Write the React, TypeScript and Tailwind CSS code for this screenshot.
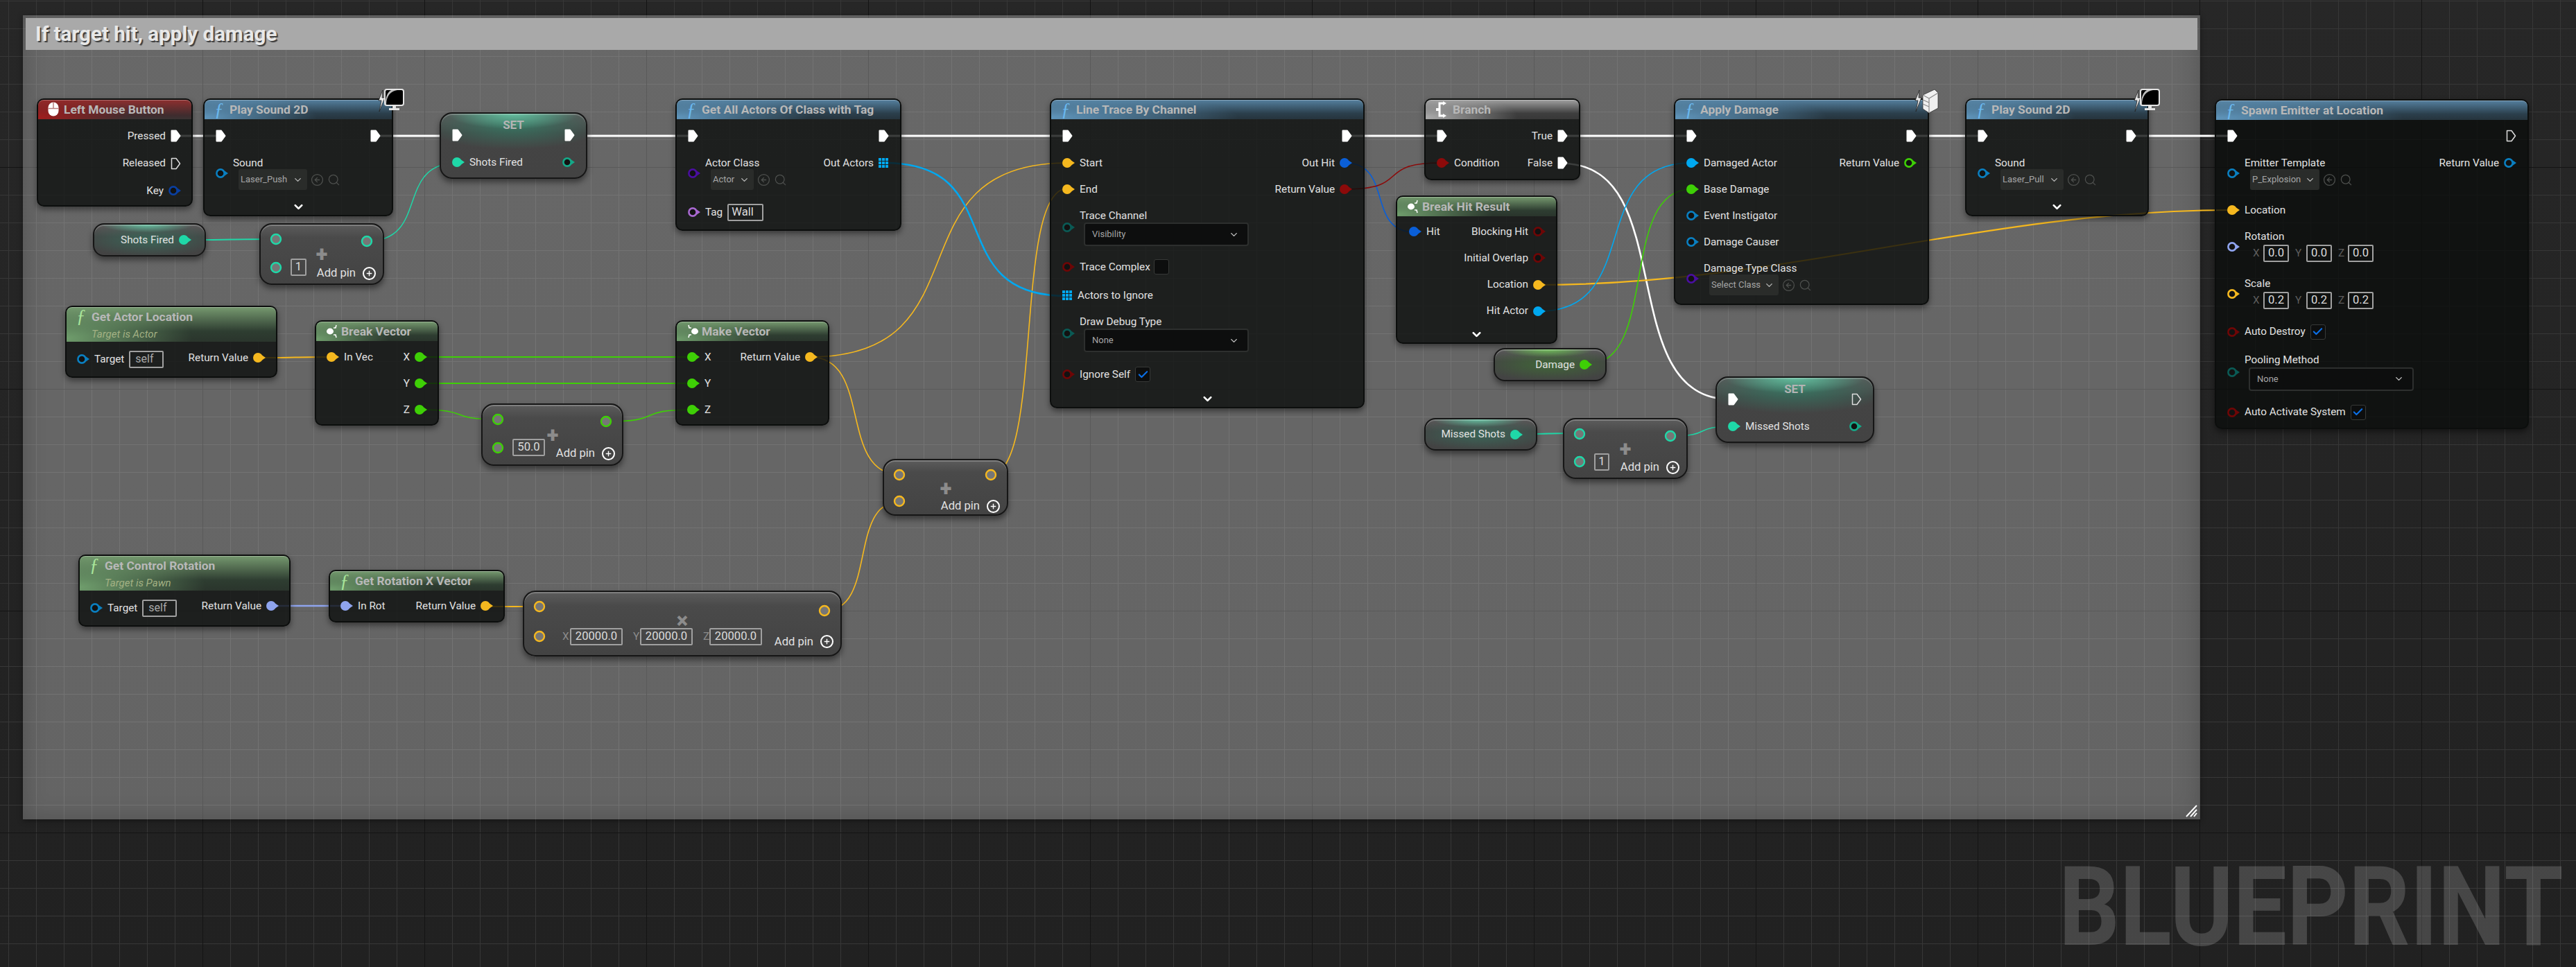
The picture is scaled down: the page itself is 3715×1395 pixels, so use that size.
import React from "react";
import { Check, ChevronDown, CircleArrowLeft, Plus, Search } from "lucide-react";

const SKY = "#00a8f0";
const DEEP = "#0a5fd8";
const OBJ = "#0a7fc0";
const YEL = "#f5b81f";
const GRN = "#3ecf06";
const TEAL = "#1fd8a8";
const TEAL_DIM = "#15a888";
const RED = "#8c0a0a";
const RED_DIM = "#6e0606";
const PUR = "#4a0ea0";
const ENUM = "#0a5a55";
const ROT = "#8fa4ee";

const tones = {
  blue: "bg-[radial-gradient(ellipse_60%_130%_at_0%_90%,#5f95bb_0%,transparent_100%),linear-gradient(180deg,#55809f_0%,#2b3f4c_70%,#26343d_100%)]",
  green: "bg-[radial-gradient(ellipse_60%_130%_at_0%_90%,#6f9d6c_0%,transparent_100%),linear-gradient(180deg,#76996f_0%,#2e3d31_70%,#2a352c_100%)]",
  red: "bg-[radial-gradient(ellipse_60%_130%_at_0%_90%,#a01d1d_0%,transparent_100%),linear-gradient(180deg,#8e2f2f_0%,#3f2c2e_80%,#3a3333_100%)]",
  gray: "bg-[radial-gradient(ellipse_60%_130%_at_0%_90%,#acacac_0%,transparent_100%),linear-gradient(180deg,#a0a0a0_0%,#3e3e3e_70%,#383838_100%)]",
};

// pin centre to pin centre, x1 y1 x2 y2 colour width
const wires: [number, number, number, number, string, number][] = [
  [253, 196, 318, 196, "#ffffff", 3],
  [542, 196, 660, 196, "#ffffff", 3],
  [820, 196, 998, 196, "#ffffff", 3],
  [1275, 196, 1538, 196, "#ffffff", 3],
  [1942, 196, 2078, 196, "#ffffff", 3],
  [2254, 196, 2438, 196, "#ffffff", 3],
  [2758, 196, 2858, 196, "#ffffff", 3],
  [3074, 196, 3218, 196, "#ffffff", 3],
  [2254, 236, 2495, 576, "#ffffff", 2.6],
  [267, 346, 399, 345, TEAL, 2],
  [529, 348, 660, 235, TEAL, 1.5],
  [372, 516, 480, 515, YEL, 2.2],
  [605, 515, 1000, 515, GRN, 2],
  [605, 553, 1000, 553, GRN, 2],
  [605, 591, 720, 605, GRN, 1.6],
  [874, 608, 1000, 591, GRN, 1.6],
  [1168, 515, 1539, 235, YEL, 1.6],
  [1168, 515, 1299, 685, YEL, 1.6],
  [1428, 685, 1539, 272, YEL, 1.6],
  [1189, 881, 1299, 723, YEL, 1.6],
  [394, 874, 499, 874, ROT, 2.4],
  [701, 875, 779, 875, YEL, 2.2],
  [1276, 235, 1538, 427, SKY, 2.6],
  [1940, 235, 2040, 335, DEEP, 1.6],
  [1940, 273, 2078, 235, RED, 1.6],
  [2219, 411, 3217, 303, YEL, 2.2],
  [2219, 449, 2439, 235, SKY, 1.6],
  [2288, 526, 2439, 273, GRN, 1.6],
  [2188, 626, 2279, 625, TEAL, 2],
  [2409, 629, 2501, 615, TEAL, 1.5],
];

function spline(x1: number, y1: number, x2: number, y2: number) {
  const t = Math.min(Math.abs(x2 - x1) * 0.7, 350);
  return `M${x1} ${y1} C${x1 + t} ${y1} ${x2 - t} ${y2} ${x2} ${y2}`;
}

function Pin({ c, on, className = "" }: { c: string; on?: boolean; className?: string }) {
  return (
    <svg width="18" height="14" viewBox="0 0 18 14" className={`shrink-0 ${className}`}>
      <polygon points="13,3.5 18,7 13,10.5" fill={c} />
      {on ? (
        <circle cx="7" cy="7" r="7" fill={c} />
      ) : (
        <circle cx="7" cy="7" r="5.6" fill="#121212" stroke={c} strokeWidth="2.6" />
      )}
    </svg>
  );
}

function Exec({ on }: { on?: boolean }) {
  return (
    <svg width="15" height="18" viewBox="0 0 15 18" className="shrink-0">
      <path
        d="M1.5 1.5 H8 L13.5 9 L8 16.5 H1.5 Z"
        fill={on ? "#fff" : "none"}
        stroke={on ? "#fff" : "#ddd"}
        strokeWidth={on ? 2 : 1.5}
        strokeLinejoin="round"
      />
    </svg>
  );
}

function ArrayPin() {
  return (
    <svg width="15" height="15" viewBox="0 0 15 15" className="shrink-0">
      {[0, 5, 10].map((y) =>
        [0, 5, 10].map((x) => <rect key={`${x}-${y}`} x={x} y={y} width="4" height="4" fill={SKY} />),
      )}
    </svg>
  );
}

function T({ children }: { children: React.ReactNode }) {
  return <span className="whitespace-nowrap text-[15.3px] text-[#e2e2e2]">{children}</span>;
}

function Axis({ children, className = "" }: { children: React.ReactNode; className?: string }) {
  return <span className={`text-[15.3px] ${className}`}>{children}</span>;
}

function Row({ children, end, className = "" }: { children: React.ReactNode; end?: boolean; className?: string }) {
  return (
    <div className={`flex h-6 items-center gap-[7px] ${end ? "justify-end" : ""} ${className}`}>{children}</div>
  );
}

function Node({ pos, children }: { pos: string; children: React.ReactNode }) {
  return (
    <div
      className={`absolute flex flex-col rounded-[10px] border-2 border-[#0c0e0d] bg-[#0b0e0c]/80 shadow-[0_4px_9px_rgba(0,0,0,0.45)] ${pos}`}
    >
      {children}
    </div>
  );
}

function Fn({ color }: { color: string }) {
  return <span className={`w-[22px] shrink-0 [font-family:'Liberation_Serif',serif] text-[27px] leading-none italic ${color}`}>ƒ</span>;
}

function Head({
  tone,
  icon,
  title,
  sub,
}: {
  tone: keyof typeof tones;
  icon: React.ReactNode;
  title: string;
  sub?: string;
}) {
  return (
    <div
      className={`flex shrink-0 flex-col rounded-t-[8px] pl-[14px] shadow-[inset_0_1px_0_rgba(255,255,255,0.3)] ${sub ? "h-[50px]" : "h-[28px] justify-center"} ${tones[tone]}`}
    >
      <div className={`flex items-center ${sub ? "h-[28px]" : ""}`}>
        {icon}
        <span className="whitespace-nowrap text-[17.4px] font-bold text-[#b8b8b8]">{title}</span>
      </div>
      {sub && <span className="ml-[22px] text-[15px] text-[#a3b184] italic">{sub}</span>}
    </div>
  );
}

function More() {
  return (
    <div className="mt-auto mb-[2px] flex justify-center">
      <ChevronDown size={19} strokeWidth={3.4} className="text-white" />
    </div>
  );
}

function Block({
  c,
  label,
  pinClass = "mt-5",
  children,
  className = "",
}: {
  c: string;
  label: string;
  pinClass?: string;
  children: React.ReactNode;
  className?: string;
}) {
  return (
    <div className={`flex gap-[7px] ${className}`}>
      <Pin c={c} className={pinClass} />
      <div>
        <Row>
          <T>{label}</T>
        </Row>
        {children}
      </div>
    </div>
  );
}

function Picker({ name, w }: { name: string; w: string }) {
  return (
    <div className="-mt-[3px] ml-2 flex items-center gap-[5px] text-[#4e504e]">
      <div className={`flex h-[30px] items-center justify-between rounded-[3px] bg-[#2a2c2a] pr-[6px] pl-[3px] ${w}`}>
        <span className="whitespace-nowrap text-[13px] text-[#a6a6a6]">{name}</span>
        <ChevronDown size={15} strokeWidth={2.2} className="text-[#b5b5b5]" />
      </div>
      <CircleArrowLeft size={19} strokeWidth={1.6} />
      <Search size={19} strokeWidth={1.6} />
    </div>
  );
}

function Dropdown({ name }: { name: string }) {
  return (
    <div className="-mt-[2px] ml-[6px] flex h-[34px] w-[238px] items-center justify-between rounded-[4px] border-2 border-[#2d2f2e] bg-[#0d0e0e] pr-[12px] pl-[10px]">
      <span className="text-[13px] text-[#a6a6a6]">{name}</span>
      <ChevronDown size={15} strokeWidth={2.2} className="text-[#c4c4c4]" />
    </div>
  );
}

function Lit({ children, className = "" }: { children: React.ReactNode; className?: string }) {
  return (
    <div
      className={`flex h-[25px] items-center justify-center rounded-[2px] border-2 border-[#a0a0a0] text-[16.6px] text-[#dcdcdc] ${className}`}
    >
      {children}
    </div>
  );
}

function Self() {
  return (
    <div className="flex h-[25px] w-[50px] items-center rounded-[2px] border-2 border-[#a0a0a0] pl-[7px] text-[16px] text-[#a8a8a8]">
      self
    </div>
  );
}

function Tick({ off, className = "" }: { off?: boolean; className?: string }) {
  return (
    <div
      className={`flex h-[22px] w-[22px] shrink-0 items-center justify-center rounded-[3px] border border-[#373937] bg-[#0d0e0e] ${className}`}
    >
      {!off && <Check size={17} strokeWidth={3} className="text-[#0b6fe6]" />}
    </div>
  );
}

function Xyz({ values }: { values: string[] }) {
  return (
    <div className="ml-3 flex h-6 items-center">
      <Axis className="w-[15px] text-[#5d5d5d]">X</Axis>
      <Lit className="w-[37px]">{values[0]}</Lit>
      <Axis className="ml-[9px] w-[16px] text-[#5d5d5d]">Y</Axis>
      <Lit className="w-[37px]">{values[1]}</Lit>
      <Axis className="ml-[9px] w-[14px] text-[#5d5d5d]">Z</Axis>
      <Lit className="w-[37px]">{values[2]}</Lit>
    </div>
  );
}

function Ring({ c }: { c: string }) {
  return (
    <svg width="18" height="18" viewBox="0 0 18 18" className="shrink-0">
      <circle cx="9" cy="9" r="7" fill="#767676" stroke={c} strokeWidth="2.4" />
    </svg>
  );
}

function AddPin() {
  return (
    <div className="flex h-6 items-center gap-[10px]">
      <span className="whitespace-nowrap text-[16.6px] text-[#e2e2e2]">Add pin</span>
      <span className="flex h-[19px] w-[19px] items-center justify-center rounded-full border-2 border-white">
        <Plus size={11} strokeWidth={3} className="text-white" />
      </span>
    </div>
  );
}

function Compact({
  pos,
  c,
  symbol = "+",
  symbolPos,
  in2,
  out,
  add,
  children,
}: {
  pos: string;
  c: string;
  symbol?: string;
  symbolPos: string;
  in2: string;
  out: string;
  add: string;
  children?: React.ReactNode;
}) {
  return (
    <div
      className={`absolute rounded-[18px] border-2 border-[#161616] bg-[linear-gradient(180deg,#5c5c5c_0%,#4a4a4a_22%,#434343_100%)] shadow-[0_5px_9px_rgba(0,0,0,0.45),inset_0_2px_0_rgba(255,255,255,0.22)] ${pos}`}
    >
      <span
        className={`absolute -translate-x-1/2 -translate-y-1/2 text-[31px] leading-[16px] font-black text-[#8c8c8c] ${symbolPos}`}
      >
        {symbol}
      </span>
      <div className="flex justify-between pt-[9px] pr-[10px] pl-[13px]">
        <div className="flex flex-col">
          <Row>
            <Ring c={c} />
          </Row>
          <Row className={`gap-[12px] ${in2}`}>
            <Ring c={c} />
            {children}
          </Row>
        </div>
        <div className="relative flex flex-col items-end">
          <Row className={`mr-[4px] ${out}`}>
            <Ring c={c} />
          </Row>
          <div className={add}>
            <AddPin />
          </div>
        </div>
      </div>
    </div>
  );
}

function Variable({ pos, c, label, tone }: { pos: string; c: string; label: string; tone: string }) {
  return (
    <div
      className={`absolute flex items-center justify-end rounded-[16px] border-2 border-[#161616] pr-[19px] shadow-[0_5px_9px_rgba(0,0,0,0.45),inset_0_2px_0_rgba(255,255,255,0.2)] ${tone} ${pos}`}
    >
      <Row>
        <T>{label}</T>
        <Pin c={c} on />
      </Row>
    </div>
  );
}

function SetNode({ pos, label, done }: { pos: string; label: string; done?: boolean }) {
  return (
    <div
      className={`absolute rounded-[18px] border-2 border-[#161616] bg-[radial-gradient(ellipse_45%_24%_at_50%_0%,#63bf9f_0%,transparent_100%),radial-gradient(ellipse_62%_38%_at_50%_18%,rgba(50,130,105,0.75)_0%,transparent_100%),linear-gradient(180deg,#5a5a5a_0%,#444444_30%,#434343_100%)] px-[16px] pt-[19px] shadow-[0_5px_9px_rgba(0,0,0,0.45),inset_0_2px_0_rgba(255,255,255,0.2)] ${pos}`}
    >
      <Row className="justify-between">
        <Exec on />
        <span className="-mt-[28px] text-[17px] font-bold text-[#b4b4b4]">SET</span>
        <Exec on={!done} />
      </Row>
      <Row className="mt-[15px] justify-between">
        <div className="flex items-center gap-[7px]">
          <Pin c={TEAL} on />
          <T>{label}</T>
        </div>
        <Pin c={TEAL_DIM} />
      </Row>
    </div>
  );
}

function StructIcon({ flip }: { flip?: boolean }) {
  return (
    <span className="w-[22px] shrink-0">
      <svg width="18" height="20" viewBox="0 0 18 20" className={flip ? "-scale-x-100" : ""}>
        <ellipse cx="6" cy="10" rx="5" ry="4.4" fill="#fff" />
        <path d="M11 5 L14 5 L15 1 M11 15 L14 15 L15 19" stroke="#fff" strokeWidth="1.6" fill="none" />
      </svg>
    </span>
  );
}

function BranchIcon() {
  return (
    <span className="w-[25px] shrink-0">
      <svg width="20" height="24" viewBox="0 0 20 24">
        <path d="M11 3 H6 V21 H11" stroke="#fff" strokeWidth="3" fill="none" />
        <path d="M11 0 L16 3 L11 6 Z M11 18 L16 21 L11 24 Z M1 10 H6 V14 H1 Z" fill="#fff" />
      </svg>
    </span>
  );
}

function MouseIcon() {
  return (
    <span className="w-[23px] shrink-0">
      <svg width="16" height="21" viewBox="0 0 16 21">
        <rect x="0.5" y="0.5" width="15" height="20" rx="7.5" fill="#fff" />
        <path d="M0 9.5 H16 M8 0 V9" stroke="#b98080" strokeWidth="1.5" />
      </svg>
    </span>
  );
}

function Bolt() {
  return <path d="M8 2 L2 17 L6 17 L3 33 L11 13 L7 13 Z" fill="#e8e8e8" stroke="#222" strokeWidth="0.8" />;
}

function MonitorBadge({ pos }: { pos: string }) {
  return (
    <svg width="40" height="33" viewBox="0 0 40 33" className={`absolute ${pos}`}>
      <Bolt />
      <rect x="11" y="1" width="27" height="23" rx="3" fill="#000" stroke="#e4e4e4" strokeWidth="2" />
      <path d="M13 23 C13 10 20 3 29 2 L20 2 C14 6 12 12 12 23 Z" fill="#bdbdbd" />
      <path d="M22 25 H27 V28 H32 V31 H17 V28 H22 Z" fill="#e4e4e4" />
    </svg>
  );
}

function CubeBadge({ pos }: { pos: string }) {
  return (
    <svg width="36" height="36" viewBox="0 0 36 36" className={`absolute ${pos}`}>
      <Bolt />
      <path d="M13 9 L30 1 L35 6 L35 28 L22 35 L13 29 Z" fill="#f0f0f0" stroke="#333" strokeWidth="0.8" />
      <path d="M22 14 L35 6 M22 14 V35 M22 14 L13 9 M13 16 L22 20 M13 22 L22 26" stroke="#8a8a8a" strokeWidth="1.2" fill="none" />
    </svg>
  );
}

export default function App() {
  return (
    <div className="relative h-[1395px] w-[3715px] overflow-hidden bg-[#252525] [background-image:linear-gradient(#141414_1px,transparent_1px),linear-gradient(90deg,#141414_1px,transparent_1px),linear-gradient(#373737_1px,transparent_1px),linear-gradient(90deg,#373737_1px,transparent_1px),linear-gradient(#272727,#212121)] [background-size:320px_320px,320px_320px,40px_40px,40px_40px,100%_100%] [background-position:0_241px,292px_0,0_1px,12px_0,0_0] [font-family:Roboto,sans-serif]">
      {/* comment box */}
      <div className="absolute top-[22px] left-[33px] h-[1160px] w-[3140px] bg-white/30 px-1 pt-1 shadow-[inset_0_0_34px_rgba(0,0,0,0.2),0_2px_8px_rgba(0,0,0,0.4)]">
        <div className="flex h-[46px] items-center bg-[#a9a9a9] pl-[14px] text-[29.6px] font-bold text-[#e8e8e8] [text-shadow:2px_2px_1px_#3c3c3c]">
          If target hit, apply damage
        </div>
        <svg width="18" height="18" viewBox="0 0 18 18" className="absolute right-[3px] bottom-[3px]">
          <path d="M1 17 L16 1 M7 17 L16 7 M12 17 L16 12" stroke="#fff" strokeWidth="2" />
        </svg>
      </div>

      {/* watermark, stretched tall to get the editor's narrow letters */}
      <div className="absolute top-[1228px] left-[2969px] origin-top-left scale-y-[1.16] text-[138px] leading-none font-bold whitespace-nowrap text-white/[0.17]">
        BLUEPRINT
      </div>

      <svg width="3715" height="1395" className="absolute top-0 left-0">
        {wires.map(([x1, y1, x2, y2, c, w], i) => (
          <path key={i} d={spline(x1, y1, x2, y2)} stroke={c} strokeWidth={w} fill="none" />
        ))}
      </svg>

      {/* input event */}
      <Node pos="left-[53px] top-[142px] w-[225px] h-[156px]">
        <Head tone="red" icon={<MouseIcon />} title="Left Mouse Button" />
        <div className="flex flex-col gap-[15.5px] pt-3 pr-[15px]">
          <Row end>
            <T>Pressed</T>
            <Exec on />
          </Row>
          <Row end>
            <T>Released</T>
            <Exec />
          </Row>
          <Row end>
            <T>Key</T>
            <Pin c="#0a3fa0" />
          </Row>
        </div>
      </Node>

      <Node pos="left-[293px] top-[142px] w-[274px] h-[170px]">
        <Head tone="blue" icon={<Fn color="text-[#6ab8ee]" />} title="Play Sound 2D" />
        <div className="flex justify-between px-[16px] pt-3">
          <div className="flex flex-col">
            <Row>
              <Exec on />
            </Row>
            <Block c={OBJ} label="Sound" className="mt-[15px]">
              <Picker name="Laser_Push" w="w-[99px]" />
            </Block>
          </div>
          <Row>
            <Exec on />
          </Row>
        </div>
        <More />
        <MonitorBadge pos="-top-[16px] -right-[19px]" />
      </Node>

      <SetNode pos="left-[634px] top-[162px] w-[213px] h-[96px]" label="Shots Fired" />

      <Variable
        pos="left-[134px] top-[322px] w-[163px] h-[48px]"
        c={TEAL}
        label="Shots Fired"
        tone="bg-[radial-gradient(ellipse_42%_26%_at_48%_0%,#63bf9f_0%,transparent_100%),radial-gradient(ellipse_62%_55%_at_50%_50%,rgba(50,130,105,0.55)_0%,transparent_100%),linear-gradient(180deg,#5a5a5a_0%,#444444_40%,#434343_100%)]"
      />

      <Compact
        pos="left-[374px] top-[322px] w-[180px] h-[89px]"
        c={TEAL}
        symbolPos="left-[88px] top-[43px]"
        in2="mt-[16.7px]"
        out="mt-[3px]"
        add="mt-[22px]"
      >
        <Lit className="w-[23px]">1</Lit>
      </Compact>

      <Node pos="left-[94px] top-[441px] w-[306px] h-[104px]">
        <Head tone="green" icon={<Fn color="text-[#a8e49a]" />} title="Get Actor Location" sub="Target is Actor" />
        <div className="flex justify-between px-[15px] pt-[13px]">
          <Row>
            <Pin c={OBJ} />
            <T>Target</T>
            <Self />
          </Row>
          <Row className="-mt-[2px]">
            <T>Return Value</T>
            <Pin c={YEL} on />
          </Row>
        </div>
      </Node>

      <Node pos="left-[454px] top-[462px] w-[179px] h-[152px]">
        <Head tone="green" icon={<StructIcon />} title="Break Vector" />
        <div className="flex justify-between px-[15px] pt-[11px]">
          <Row>
            <Pin c={YEL} on />
            <T>In Vec</T>
          </Row>
          <div className="flex flex-col gap-[14px]">
            <Row end>
              <T>X</T>
              <Pin c={GRN} on />
            </Row>
            <Row end>
              <T>Y</T>
              <Pin c={GRN} on />
            </Row>
            <Row end>
              <T>Z</T>
              <Pin c={GRN} on />
            </Row>
          </div>
        </div>
      </Node>

      <Compact
        pos="left-[694px] top-[582px] w-[205px] h-[90px]"
        c={GRN}
        symbolPos="left-[101px] top-[44px]"
        in2="mt-[16.7px]"
        out="mt-[3px]"
        add="mt-[22px]"
      >
        <Lit className="w-[47px]">50.0</Lit>
      </Compact>

      <Node pos="left-[974px] top-[462px] w-[222px] h-[152px]">
        <Head tone="green" icon={<StructIcon flip />} title="Make Vector" />
        <div className="flex justify-between px-[15px] pt-[11px]">
          <div className="flex flex-col gap-[14px]">
            <Row>
              <Pin c={GRN} on />
              <T>X</T>
            </Row>
            <Row>
              <Pin c={GRN} on />
              <T>Y</T>
            </Row>
            <Row>
              <Pin c={GRN} on />
              <T>Z</T>
            </Row>
          </div>
          <Row>
            <T>Return Value</T>
            <Pin c={YEL} on />
          </Row>
        </div>
      </Node>

      <Node pos="left-[113px] top-[800px] w-[306px] h-[104px]">
        <Head tone="green" icon={<Fn color="text-[#a8e49a]" />} title="Get Control Rotation" sub="Target is Pawn" />
        <div className="flex justify-between px-[15px] pt-[13px]">
          <Row>
            <Pin c={OBJ} />
            <T>Target</T>
            <Self />
          </Row>
          <Row className="-mt-[3px]">
            <T>Return Value</T>
            <Pin c={ROT} on />
          </Row>
        </div>
      </Node>

      <Node pos="left-[474px] top-[822px] w-[254px] h-[76px]">
        <Head tone="green" icon={<Fn color="text-[#a8e49a]" />} title="Get Rotation X Vector" />
        <div className="flex justify-between px-[15px] pt-[10px]">
          <Row>
            <Pin c={ROT} on />
            <T>In Rot</T>
          </Row>
          <Row>
            <T>Return Value</T>
            <Pin c={YEL} on />
          </Row>
        </div>
      </Node>

      <Compact
        pos="left-[754px] top-[852px] w-[460px] h-[95px]"
        c={YEL}
        symbol="×"
        symbolPos="left-[228px] top-[42px]"
        in2="mt-[19px]"
        out="mt-[5.7px]"
        add="mt-[21.3px]"
      >
        <div className="ml-[12px] flex items-center">
          <Axis className="w-[11px] text-[#8c8c8c]">X</Axis>
          <Lit className="w-[76px]">20000.0</Lit>
          <Axis className="ml-[15px] w-[10px] text-[#8c8c8c]">Y</Axis>
          <Lit className="w-[76px]">20000.0</Lit>
          <Axis className="ml-[15px] w-[9px] text-[#8c8c8c]">Z</Axis>
          <Lit className="w-[76px]">20000.0</Lit>
        </div>
      </Compact>

      <Compact
        pos="left-[1273px] top-[662px] w-[181px] h-[82px]"
        c={YEL}
        symbolPos="left-[89px] top-[41px]"
        in2="mt-[13.7px]"
        out=""
        add="mt-[21.7px]"
      />

      <Node pos="left-[974px] top-[142px] w-[326px] h-[191px]">
        <Head tone="blue" icon={<Fn color="text-[#6ab8ee]" />} title="Get All Actors Of Class with Tag" />
        <div className="flex justify-between px-[16px] pt-3">
          <div className="flex flex-col">
            <Row>
              <Exec on />
            </Row>
            <Block c={PUR} label="Actor Class" className="mt-[15px]">
              <Picker name="Actor" w="w-[62px]" />
            </Block>
            <Row className="mt-[20px]">
              <Pin c="#a868d0" />
              <T>Tag</T>
              <Lit className="w-[52px] justify-start pl-[4px]">Wall</Lit>
            </Row>
          </div>
          <div className="flex flex-col items-end">
            <Row>
              <Exec on />
            </Row>
            <Row className="mt-[15px]">
              <T>Out Actors</T>
              <ArrayPin />
            </Row>
          </div>
        </div>
      </Node>

      <Node pos="left-[1514px] top-[142px] w-[454px] h-[447px]">
        <Head tone="blue" icon={<Fn color="text-[#6ab8ee]" />} title="Line Trace By Channel" />
        <div className="flex justify-between px-[16px] pt-3">
          <div className="flex flex-col">
            <Row>
              <Exec on />
            </Row>
            <Row className="mt-[15px]">
              <Pin c={YEL} on />
              <T>Start</T>
            </Row>
            <Row className="mt-[14px]">
              <Pin c={YEL} on />
              <T>End</T>
            </Row>
            <Block c={ENUM} label="Trace Channel" pinClass="mt-[22px]" className="mt-[14px]">
              <Dropdown name="Visibility" />
            </Block>
            <Row className="mt-[18px]">
              <Pin c={RED_DIM} />
              <T>Trace Complex</T>
              <Tick off className="-ml-[2px]" />
            </Row>
            <Row className="mt-[17px]">
              <ArrayPin />
              <T>Actors to Ignore</T>
            </Row>
            <Block c={ENUM} label="Draw Debug Type" pinClass="mt-[22px]" className="mt-[14px]">
              <Dropdown name="None" />
            </Block>
            <Row className="mt-[20px]">
              <Pin c={RED_DIM} />
              <T>Ignore Self</T>
              <Tick />
            </Row>
          </div>
          <div className="flex flex-col items-end">
            <Row>
              <Exec on />
            </Row>
            <Row className="mt-[15px]">
              <T>Out Hit</T>
              <Pin c={DEEP} on />
            </Row>
            <Row className="mt-[14px]">
              <T>Return Value</T>
              <Pin c={RED} on />
            </Row>
          </div>
        </div>
        <More />
      </Node>

      <Node pos="left-[2054px] top-[142px] w-[225px] h-[118px]">
        <Head tone="gray" icon={<BranchIcon />} title="Branch" />
        <div className="flex justify-between px-[16px] pt-3">
          <div className="flex flex-col gap-[15px]">
            <Row>
              <Exec on />
            </Row>
            <Row>
              <Pin c={RED} on />
              <T>Condition</T>
            </Row>
          </div>
          <div className="flex flex-col items-end gap-[15px]">
            <Row>
              <T>True</T>
              <Exec on />
            </Row>
            <Row>
              <T>False</T>
              <Exec on />
            </Row>
          </div>
        </div>
      </Node>

      <Node pos="left-[2013px] top-[282px] w-[233px] h-[214px]">
        <Head tone="green" icon={<StructIcon />} title="Break Hit Result" />
        <div className="flex justify-between pt-[10px] pr-[15px] pl-[17px]">
          <Row>
            <Pin c={DEEP} on />
            <T>Hit</T>
          </Row>
          <div className="flex flex-col items-end gap-[14.3px]">
            <Row>
              <T>Blocking Hit</T>
              <Pin c={RED_DIM} />
            </Row>
            <Row>
              <T>Initial Overlap</T>
              <Pin c={RED_DIM} />
            </Row>
            <Row>
              <T>Location</T>
              <Pin c={YEL} on />
            </Row>
            <Row>
              <T>Hit Actor</T>
              <Pin c={SKY} on />
            </Row>
          </div>
        </div>
        <More />
      </Node>

      <Node pos="left-[2414px] top-[142px] w-[368px] h-[298px]">
        <Head tone="blue" icon={<Fn color="text-[#6ab8ee]" />} title="Apply Damage" />
        <div className="flex justify-between px-[16px] pt-3">
          <div className="flex flex-col">
            <Row>
              <Exec on />
            </Row>
            <Row className="mt-[15px]">
              <Pin c={SKY} on />
              <T>Damaged Actor</T>
            </Row>
            <Row className="mt-[14px]">
              <Pin c={GRN} on />
              <T>Base Damage</T>
            </Row>
            <Row className="mt-[14px]">
              <Pin c={OBJ} />
              <T>Event Instigator</T>
            </Row>
            <Row className="mt-[14px]">
              <Pin c={OBJ} />
              <T>Damage Causer</T>
            </Row>
            <Block c={PUR} label="Damage Type Class" className="mt-[14px]">
              <Picker name="Select Class" w="w-[100px]" />
            </Block>
          </div>
          <div className="flex flex-col items-end">
            <Row>
              <Exec on />
            </Row>
            <Row className="mt-[15px]">
              <T>Return Value</T>
              <Pin c={GRN} />
            </Row>
          </div>
        </div>
        <CubeBadge pos="-top-[16px] -right-[16px]" />
      </Node>

      <Node pos="left-[2834px] top-[142px] w-[265px] h-[170px]">
        <Head tone="blue" icon={<Fn color="text-[#6ab8ee]" />} title="Play Sound 2D" />
        <div className="flex justify-between px-[16px] pt-3">
          <div className="flex flex-col">
            <Row>
              <Exec on />
            </Row>
            <Block c={OBJ} label="Sound" className="mt-[15px]">
              <Picker name="Laser_Pull" w="w-[91px]" />
            </Block>
          </div>
          <Row>
            <Exec on />
          </Row>
        </div>
        <More />
        <MonitorBadge pos="-top-[16px] -right-[19px]" />
      </Node>

      <Variable
        pos="left-[2154px] top-[502px] w-[163px] h-[48px]"
        c={GRN}
        label="Damage"
        tone="bg-[radial-gradient(ellipse_42%_26%_at_48%_0%,#6fbf58_0%,transparent_100%),radial-gradient(ellipse_62%_55%_at_50%_50%,rgba(60,130,45,0.55)_0%,transparent_100%),linear-gradient(180deg,#5a5a5a_0%,#444444_40%,#434343_100%)]"
      />

      <Variable
        pos="left-[2054px] top-[603px] w-[163px] h-[47px]"
        c={TEAL}
        label="Missed Shots"
        tone="bg-[radial-gradient(ellipse_42%_26%_at_48%_0%,#63bf9f_0%,transparent_100%),radial-gradient(ellipse_62%_55%_at_50%_50%,rgba(50,130,105,0.55)_0%,transparent_100%),linear-gradient(180deg,#5a5a5a_0%,#444444_40%,#434343_100%)]"
      />

      <Compact
        pos="left-[2254px] top-[603px] w-[180px] h-[88px]"
        c={TEAL}
        symbolPos="left-[88px] top-[43px]"
        in2="mt-[16.4px]"
        out="mt-[2.5px]"
        add="mt-[21.5px]"
      >
        <Lit className="w-[22px]">1</Lit>
      </Compact>

      <SetNode pos="left-[2474px] top-[543px] w-[229px] h-[96px]" label="Missed Shots" done />

      <Node pos="left-[3194px] top-[143px] w-[453px] h-[476px]">
        <Head tone="blue" icon={<Fn color="text-[#6ab8ee]" />} title="Spawn Emitter at Location" />
        <div className="flex justify-between px-[16px] pt-[11px]">
          <div className="flex flex-col">
            <Row>
              <Exec on />
            </Row>
            <Block c={OBJ} label="Emitter Template" className="mt-[15px]">
              <Picker name="P_Explosion" w="w-[100px]" />
            </Block>
            <Row className="mt-[17px]">
              <Pin c={YEL} on />
              <T>Location</T>
            </Row>
            <Block c={ROT} label="Rotation" className="mt-[14px]">
              <Xyz values={["0.0", "0.0", "0.0"]} />
            </Block>
            <Block c={YEL} label="Scale" className="mt-[20px]">
              <Xyz values={["0.2", "0.2", "0.2"]} />
            </Block>
            <Row className="mt-[21.6px]">
              <Pin c={RED_DIM} />
              <T>Auto Destroy</T>
              <Tick />
            </Row>
            <Block c={ENUM} label="Pooling Method" pinClass="mt-[22px]" className="mt-[17px]">
              <Dropdown name="None" />
            </Block>
            <Row className="mt-[19px]">
              <Pin c={RED_DIM} />
              <T>Auto Activate System</T>
              <Tick />
            </Row>
          </div>
          <div className="flex flex-col items-end">
            <Row>
              <Exec />
            </Row>
            <Row className="mt-[15px]">
              <T>Return Value</T>
              <Pin c={OBJ} />
            </Row>
          </div>
        </div>
      </Node>
    </div>
  );
}
